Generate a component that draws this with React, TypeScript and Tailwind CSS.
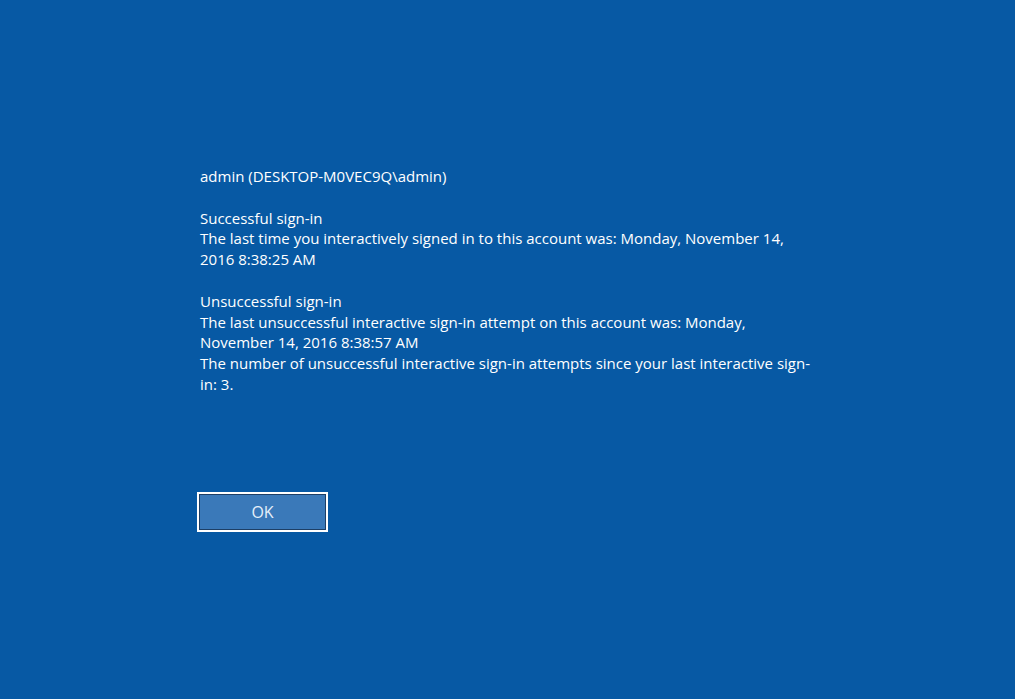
import React from "react";

export default function App() {
  return (
    <div className="w-full h-[699px] bg-[#0759a4] text-white overflow-hidden" style={{ fontFamily: '"Open Sans", "Noto Sans", sans-serif' }}>
      <div className="pt-[166px] pl-[200px] w-[818px] text-[15px] leading-[20.8px]">
        <p>admin (DESKTOP-M0VEC9Q\admin)</p>
        <p className="mt-[20.8px]">Successful sign-in</p>
        <p>The last time you interactively signed in to this account was: Monday, November 14, 2016 8:38:25 AM</p>
        <p className="mt-[20.8px]">Unsuccessful sign-in</p>
        <p>The last unsuccessful interactive sign-in attempt on this account was: Monday, November 14, 2016 8:38:57 AM</p>
        <p>The number of unsuccessful interactive sign-in attempts since your last interactive sign-in: 3.</p>
      </div>
      <div className="pl-[197px] mt-[97px]">
        <button className="w-[131px] h-[40px] border-2 border-white p-0">
          <span className="flex h-full w-full items-center justify-center border border-[#1d3f66] bg-[#3a79b9] text-[16px] text-[#e6f0fa]">OK</span>
        </button>
      </div>
    </div>
  );
}
